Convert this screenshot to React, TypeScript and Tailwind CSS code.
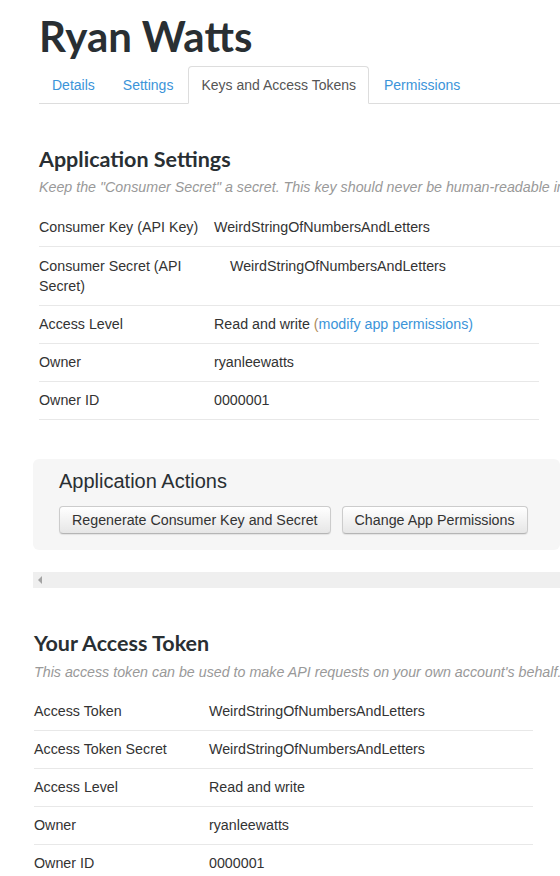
import type { ReactNode } from "react";

type Row = { label: string; value: ReactNode; valueClass?: string; tall?: boolean };

const TABS = ["Details", "Settings", "Keys and Access Tokens", "Permissions"];
const ACTIVE_TAB = "Keys and Access Tokens";

const appRowsWide: Row[] = [
  { label: "Consumer Key (API Key)", value: "WeirdStringOfNumbersAndLetters" },
  { label: "Consumer Secret (API Secret)", value: "WeirdStringOfNumbersAndLetters", valueClass: "pl-4", tall: true },
];

const appRows: Row[] = [
  {
    label: "Access Level",
    value: (
      <>
        Read and write <span className="text-[#b08a5a]">(</span>
        <a className="text-[#3b94d9]">modify app permissions</a>
        <span className="text-[#3b94d9]">)</span>
      </>
    ),
  },
  { label: "Owner", value: "ryanleewatts" },
  { label: "Owner ID", value: "0000001" },
];

const tokenRows: Row[] = [
  { label: "Access Token", value: "WeirdStringOfNumbersAndLetters" },
  { label: "Access Token Secret", value: "WeirdStringOfNumbersAndLetters" },
  { label: "Access Level", value: "Read and write" },
  { label: "Owner", value: "ryanleewatts" },
  { label: "Owner ID", value: "0000001" },
];

const headingFont = "font-['Lato','Open_Sans',sans-serif]";

export default function App() {
  return (
    <div className="h-[876px] w-[560px] overflow-hidden bg-white font-['Liberation_Sans',Arial,sans-serif] text-[14.25px] text-[#333]">
      <div className="pl-[33px]">
        <div className="pl-[6px]">
          <h1 className={`${headingFont} pt-[12px] text-[42px] font-bold leading-[48px] text-[#292f33]`}>Ryan Watts</h1>

          {/* nav tabs */}
          <ul className="mt-[6px] flex border-b border-[#ddd] text-[14px]">
            {TABS.map((t) => (
              <li key={t} className="mr-[2px] -mb-px">
                {t === ACTIVE_TAB ? (
                  <span className="block rounded-t-[4px] border border-[#ddd] border-b-transparent bg-white px-[12px] py-[8px] leading-[20px] text-[#555]">
                    {t}
                  </span>
                ) : (
                  <a className="block border border-transparent px-[12px] py-[8px] leading-[20px] text-[#3b94d9]">{t}</a>
                )}
              </li>
            ))}
          </ul>

          <SectionHeader
            className="pt-[40px]"
            title="Application Settings"
            note={'Keep the "Consumer Secret" a secret. This key should never be human-readable in your application.'}
          />
          <div className="mt-[12px]">
            {appRowsWide.map((r) => (
              <InfoRow key={r.label} row={r} />
            ))}
          </div>
          <div className="w-[500px]">
            {appRows.map((r) => (
              <InfoRow key={r.label} row={r} />
            ))}
          </div>
        </div>

        {/* actions well */}
        <div className="mt-[39px] rounded-[6px] bg-[#f6f6f6] pb-[16px] pl-[26px] pt-[8px]">
          <h3 className="text-[20px] leading-[28px] text-[#292f33]">Application Actions</h3>
          <div className="mt-[11px] flex gap-[11px]">
            <Button>Regenerate Consumer Key and Secret</Button>
            <Button>Change App Permissions</Button>
          </div>
        </div>

        {/* horizontal scrollbar */}
        <div className="mt-[22px] flex h-[16px] items-center bg-[#efefef] pl-[5px]">
          <svg width="5" height="8" viewBox="0 0 5 8">
            <path d="M4 0 L0 4 L4 8 Z" fill="#a3a3a3" />
          </svg>
        </div>

        <div className="pl-[1px]">
          <SectionHeader
            className="pt-[40px]"
            noteClass="mt-[4px]"
            title="Your Access Token"
            note="This access token can be used to make API requests on your own account's behalf. Do not share your access token secret with anyone."
          />
          <div className="mt-[11px] w-[499px]">
            {tokenRows.map((r, i) => (
              <InfoRow key={r.label} row={r} last={i === tokenRows.length - 1} />
            ))}
          </div>
        </div>
      </div>
    </div>
  );
}

function SectionHeader({
  title,
  note,
  className,
  noteClass = "mt-[3px]",
}: {
  title: string;
  note: string;
  className?: string;
  noteClass?: string;
}) {
  return (
    <div className={className}>
      <h2 className={`${headingFont} text-[21.5px] font-bold leading-[30px] text-[#292f33]`}>{title}</h2>
      <p className={`${noteClass} whitespace-nowrap italic leading-[20px] text-[#999]`}>{note}</p>
    </div>
  );
}

function InfoRow({ row, last }: { row: Row; last?: boolean }) {
  return (
    <div
      className={`flex ${row.tall ? "py-[9px] leading-[20px]" : "py-[9px] leading-[19px]"} ${
        last ? "" : "border-b border-[#e8e8e8]"
      }`}
    >
      <div className="w-[175px] shrink-0 pr-[8px]">{row.label}</div>
      <div className={row.valueClass}>{row.value}</div>
    </div>
  );
}

function Button({ children }: { children: ReactNode }) {
  return (
    <button className="h-[28px] rounded-[4px] border border-[#ccc] border-b-[#b5b5b5] bg-gradient-to-b from-white to-[#e6e6e6] px-[12px] text-[14.25px] leading-[20px] text-[#333] shadow-[0_1px_1px_rgba(0,0,0,0.08)]">
      {children}
    </button>
  );
}
